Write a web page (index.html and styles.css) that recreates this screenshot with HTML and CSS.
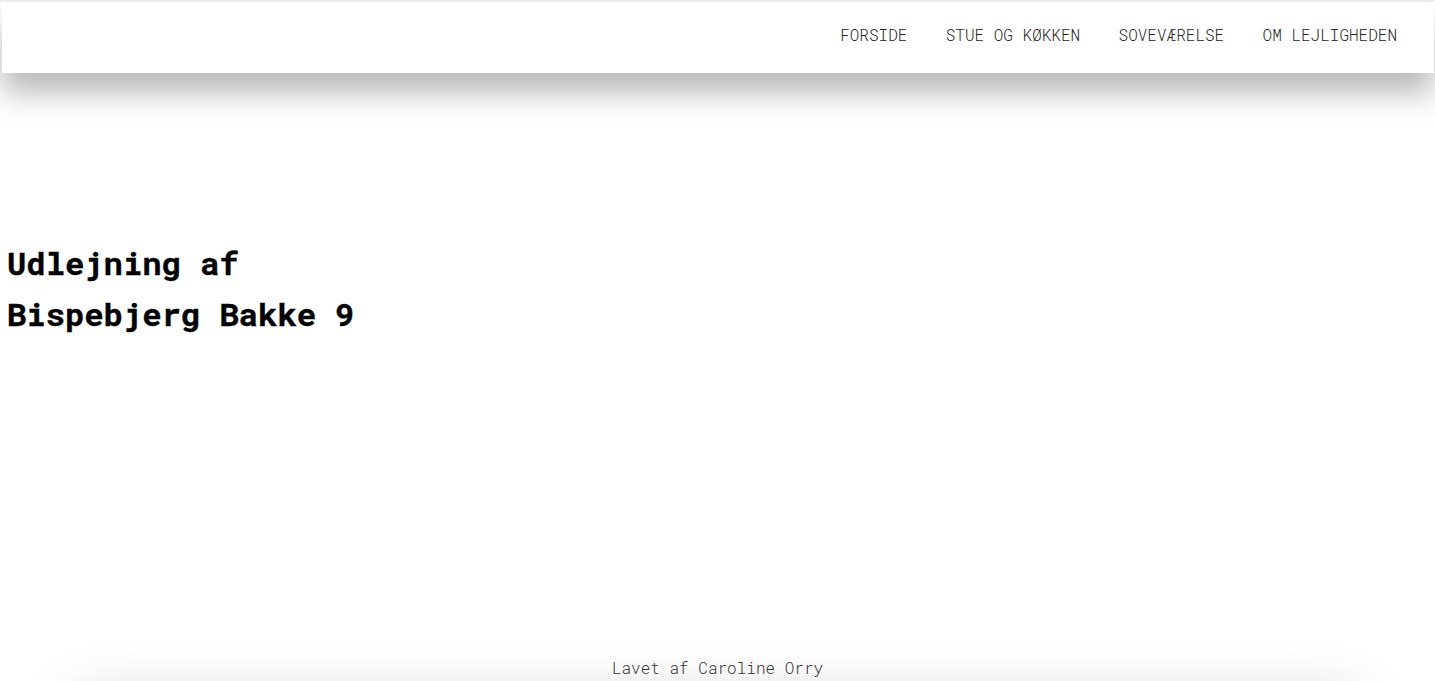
FILE: index.html
```html
<!DOCTYPE html>
<html lang="da">
<head>
<meta charset="utf-8">
<title>Bispebjerg Bakke 9</title>
<link rel="stylesheet" href="styles.css">
</head>
<body>
<header class="site-header">
  <nav class="main-nav">
    <a class="nav-link" href="#">FORSIDE</a>
    <a class="nav-link" href="#">STUE OG KØKKEN</a>
    <a class="nav-link" href="#">SOVEVÆRELSE</a>
    <a class="nav-link" href="#">OM LEJLIGHEDEN</a>
  </nav>
</header>
<main class="hero">
  <h1 class="hero-title">Udlejning af<br>Bispebjerg Bakke 9</h1>
</main>
<footer class="site-footer">
  <p class="credit">Lavet af Caroline Orry</p>
  <div class="footer-bar"></div>
</footer>
</body>
</html>
```

FILE: styles.css
```css
html, body {
  margin: 0;
  padding: 0;
  background: #ffffff;
}

body {
  font-family: "Roboto Mono", "Liberation Mono", "DejaVu Sans Mono", monospace;
  color: #000;
  padding-top: 2px;
  box-shadow: inset 0 2px 0 #efefef;
}

.site-header {
  margin: 0 1px 0 2px;
  height: 65px;
  padding-bottom: 6px;
  background: #fff;
  display: flex;
  justify-content: flex-end;
  align-items: center;
  padding-right: 37px;
  box-shadow: 0 20px 30px rgba(0, 0, 0, 0.28);
  position: relative;
  z-index: 1;
}

.main-nav {
  display: flex;
  gap: 38.4px;
}

.nav-link {
  font-size: 16px;
  font-weight: 300;
  color: #222;
  text-decoration: none;
  line-height: 24px;
}

.hero {
  padding: 164px 0 0 7px;
}

.hero-title {
  margin: 0;
  font-size: 32.2px;
  line-height: 51.2px;
  font-weight: 700;
  color: #000;
  -webkit-text-stroke: 0.4px #000;
}

.site-footer {
  padding-top: 317px;
  padding-bottom: 60px;
}

.credit {
  margin: 0;
  text-align: center;
  font-size: 16px;
  font-weight: 300;
  line-height: 24px;
  color: #333;
  position: relative;
  z-index: 1;
}

.footer-bar {
  margin: 22px 80px 0;
  height: 80px;
  background: #fff;
  box-shadow: 0 0 60px rgba(0, 0, 0, 0.22);
}
```
